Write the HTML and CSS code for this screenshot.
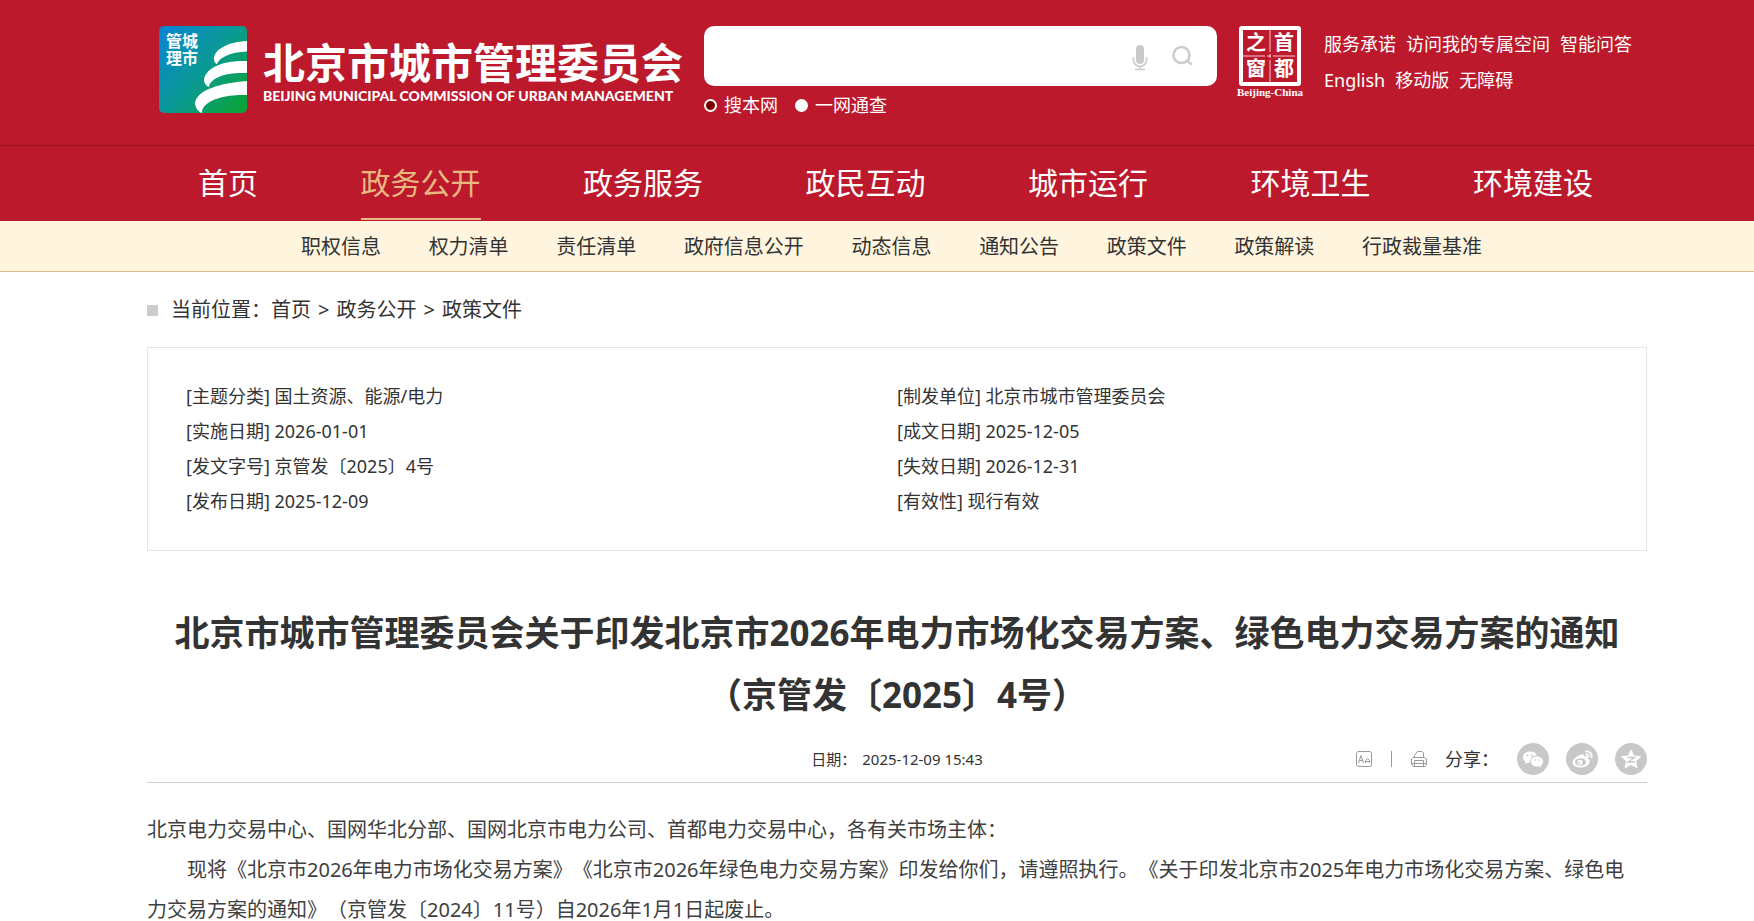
FILE: index.html
```html
<!DOCTYPE html>
<html lang="zh-CN">
<head>
<meta charset="utf-8">
<title>北京市城市管理委员会</title>
<link rel="stylesheet" href="styles.css">
</head>
<body>
<header class="header">
  <div class="wrap header-row">
    <a class="logo" href="#">
      <svg class="logo-mark" viewBox="0 0 88 87" aria-hidden="true">
        <defs>
          <linearGradient id="sky" x1="0" y1="0.1" x2="1" y2="0.9">
            <stop offset="0" stop-color="#0a86d0"/>
            <stop offset="0.5" stop-color="#0a9a94"/>
            <stop offset="1" stop-color="#0aa336"/>
          </linearGradient>
        </defs>
        <rect width="88" height="87" rx="5" fill="url(#sky)"/>
        <path fill="#fff" d="M88 15C68 16 54 24 55 34C56 37 57 38 58 38C60 32 71 26 88 25.500Z"/>
        <path fill="#fff" d="M88 35C62 34 46 43 45 54C45 57 47 60 50 61C51 52 66 46 88 47Z"/>
        <path fill="#fff" d="M88 55C61 57 38 64 36 77C36 81 39 86 43 87C42 77 60 68 88 69Z"/>
        <g class="mark-text"><text x="7" y="21">管城</text><text x="7" y="38">理市</text></g>
      </svg>
      <span class="logo-text">
        <span class="logo-cn">北京市城市管理委员会</span>
        <span class="logo-en">BEIJING MUNICIPAL COMMISSION OF URBAN MANAGEMENT</span>
      </span>
    </a>
    <form class="search">
      <div class="search-box">
        <input class="search-input" type="text" aria-label="搜索">
        <button class="icon-btn" type="button" aria-label="语音">
          <svg width="16" height="26" viewBox="0 0 16 26"><rect x="4" y="0" width="8" height="19" rx="4" fill="#c9c9c9"/><path d="M1.500 12v3a6.500 6.500 0 0 0 13 0v-3M8 21.500v3M3 24.500h10" fill="none" stroke="#c9c9c9" stroke-width="1.500"/></svg>
        </button>
        <button class="icon-btn" type="submit" aria-label="搜索">
          <svg width="22" height="26" viewBox="0 0 22 26"><circle cx="9.500" cy="10" r="8" fill="none" stroke="#ccc" stroke-width="2.500"/><path d="M14.500 15.500l5.500 4" stroke="#ccc" stroke-width="2.500"/></svg>
        </button>
      </div>
      <div class="scope">
        <label class="scope-item"><input type="radio" name="scope" checked>搜本网</label>
        <label class="scope-item"><input type="radio" name="scope">一网通查</label>
      </div>
    </form>
    <a class="seal" href="#">
      <svg class="seal-mark" viewBox="0 0 62 60" aria-hidden="true">
        <rect x="2" y="2" width="58" height="56" rx="1" fill="none" stroke="#fff" stroke-width="4"/>
        <path d="M31 4V56M4 30H58" stroke="#f6c9cd" stroke-width="1" stroke-dasharray="22 2 4 2"/>
        <g class="seal-text"><text x="7" y="24">之</text><text x="35" y="24">首</text><text x="7" y="50">窗</text><text x="35" y="50">都</text></g>
      </svg>
      <span class="seal-name">Beijing-China</span>
    </a>
    <div class="quick">
      <div class="quick-row"><a href="#">服务承诺</a><a href="#">访问我的专属空间</a><a href="#">智能问答</a></div>
      <div class="quick-row"><a href="#">English</a><a href="#">移动版</a><a href="#">无障碍</a></div>
    </div>
  </div>
</header>
<nav class="nav">
  <div class="wrap nav-row">
    <a href="#">首页</a><a class="active" href="#">政务公开</a><a href="#">政务服务</a><a href="#">政民互动</a><a href="#">城市运行</a><a href="#">环境卫生</a><a href="#">环境建设</a>
  </div>
</nav>
<nav class="subnav">
  <div class="wrap subnav-row">
    <a href="#">职权信息</a><a href="#">权力清单</a><a href="#">责任清单</a><a href="#">政府信息公开</a><a href="#">动态信息</a><a href="#">通知公告</a><a href="#">政策文件</a><a href="#">政策解读</a><a href="#">行政裁量基准</a>
  </div>
</nav>
<main class="main">
  <div class="wrap">
    <div class="crumbs"><span>当前位置：</span><a href="#">首页</a><span class="sep">&gt;</span><a href="#">政务公开</a><span class="sep">&gt;</span><a href="#">政策文件</a></div>
    <div class="meta">
      <span>[主题分类] 国土资源、能源/电力</span><span>[制发单位] 北京市城市管理委员会</span>
      <span>[实施日期] 2026-01-01</span><span>[成文日期] 2025-12-05</span>
      <span>[发文字号] 京管发〔2025〕4号</span><span>[失效日期] 2026-12-31</span>
      <span>[发布日期] 2025-12-09</span><span>[有效性] 现行有效</span>
    </div>
    <h1 class="title">北京市城市管理委员会关于印发北京市2026年电力市场化交易方案、绿色电力交易方案的通知<br>（京管发〔2025〕4号）</h1>
    <div class="info">
      <div class="date"><span>日期：</span><span>2025-12-09 15:43</span></div>
      <div class="tools">
        <button class="tool" type="button" aria-label="字号">
          <svg width="16" height="16" viewBox="0 0 16 16" fill="none" stroke="#999"><rect x=".5" y=".5" width="15" height="15" rx="2"/><path d="M2.500 12L5 4.500L7.500 12M3.500 9.500h3M9.500 12V9.500L11.500 7.500L13.500 9.500V12M9.500 10.500h4"/></svg>
        </button>
        <span class="bar"></span>
        <button class="tool" type="button" aria-label="打印">
          <svg width="16" height="16" viewBox="0 0 16 16" fill="none" stroke="#999"><path d="M3.500 6.500V4.500L6.500 .5H11L12.500 2V6.500M2 6.500H14L15.500 8V13L14 15.500H2L.5 13V8ZM3.500 15V9.500H12.500V15M.5 12.500H15.500"/></svg>
        </button>
        <span class="share-label">分享：</span>
        <div class="share">
          <a href="#" aria-label="微信"><svg viewBox="0 0 32 32"><circle cx="16" cy="16" r="16" fill="#c8c8c8"/><path fill="#fff" d="M13 8.500c-4 0-7 2.500-7 5.500 0 2 1 3.500 2.500 4.500L8 21l3-1.500 2 .3C13 15 16 12.500 20 12.500 19.300 10 16.500 8.500 13 8.500Z"/><path fill="#fff" d="M20 13.500c-3.500 0-6 2.200-6 5s2.500 5 6 5l2-.3 2.500 1.300-.5-2c1.300-1 2-2.300 2-4 0-2.800-2.500-5-6-5Z"/><g fill="#c8c8c8"><circle cx="10.500" cy="12.500" r="1"/><circle cx="15" cy="12.500" r="1"/><circle cx="18" cy="17" r=".8"/><circle cx="22" cy="17" r=".8"/></g></svg></a>
          <a href="#" aria-label="微博"><svg viewBox="0 0 32 32"><circle cx="16" cy="16" r="16" fill="#c8c8c8"/><path fill="#fff" d="M14 12c2-1.500 4.500-1 4 1.500 2-.8 4.500-.5 3.500 2 2 .6 2.800 2 2 4-1 3-4.500 5-9 5-4.500 0-8-2-8-5 0-2.500 4-6.500 7.500-7.500Z"/><ellipse cx="14.500" cy="19" rx="5.500" ry="3.800" fill="#c8c8c8"/><circle cx="14" cy="19.300" r="2.600" fill="#fff"/><circle cx="13.300" cy="19.700" r="1" fill="#c8c8c8"/><path fill="none" stroke="#fff" stroke-width="1.800" d="M19 8.500c4-1 7.500 2 6.500 6.500M19.500 11.500c2-.4 3.500 1 3.200 3"/></svg></a>
          <a href="#" aria-label="QQ空间"><svg viewBox="0 0 32 32"><circle cx="16" cy="16" r="16" fill="#c8c8c8"/><path fill="#fff" d="M16 6l3 6.500 7.500 .8-5.200 4.800L22.500 25.500 16 22l-6.500 3.500 1.500-7.400L5.500 13.300l7.500-.8Z"/><path d="M12.500 14.500h7l-6.500 4.500h7" fill="none" stroke="#c8c8c8" stroke-width="1.300"/></svg></a>
        </div>
      </div>
    </div>
    <article class="article">
      <p>北京电力交易中心、国网华北分部、国网北京市电力公司、首都电力交易中心，各有关市场主体：</p>
      <p class="indent">现将《北京市2026年电力市场化交易方案》《北京市2026年绿色电力交易方案》印发给你们，请遵照执行。《关于印发北京市2025年电力市场化交易方案、绿色电力交易方案的通知》（京管发〔2024〕11号）自2026年1月1日起废止。</p>
    </article>
  </div>
</main>
</body>
</html>
```
FILE: styles.css
```css
* { box-sizing: border-box; }
body {
  margin: 0;
  font-family: "Noto Sans", "Noto Sans CJK SC", sans-serif;
  font-size: 18px;
  color: #333;
  background: #fff;
  text-spacing-trim: space-all;
}
a { color: inherit; text-decoration: none; }
button { border: 0; padding: 0; background: none; cursor: pointer; }
svg { display: block; }
.wrap { max-width: 1500px; margin: 0 auto; }
.header, .nav, .subnav, .main { padding-left: 40px; }

.header { background: #bc1a2c; color: #fff; border-bottom: 1px solid #9a1222; }
.header-row { display: flex; align-items: flex-start; padding: 26px 0 27px 12px; }
.logo { display: flex; gap: 16px; width: 545px; flex: none; }
.logo-mark { width: 88px; height: 87px; flex: none; }
.mark-text { fill: #fff; font-size: 16px; font-weight: 700; }
.logo-text { display: flex; flex-direction: column; padding-top: 13px; white-space: nowrap; }
.logo-cn { font-size: 42px; line-height: 48px; font-weight: 700; }
.logo-en { font-family: Lato, sans-serif; font-size: 14px; line-height: 18px; font-weight: 900; }

.search { width: 513px; flex: none; }
.search-box { display: flex; align-items: center; height: 60px; padding: 3px 23px 0 0; gap: 24px; background: #fff; border-radius: 10px; }
.search-input { flex: 1; min-width: 0; height: 100%; border: 0; outline: 0; background: none; font: inherit; padding: 0 16px; }
.scope { display: flex; gap: 17px; margin-top: 6px; }
.scope-item { display: flex; align-items: center; gap: 7px; line-height: 26px; }
.scope input { appearance: none; width: 13px; height: 13px; margin: 0; border-radius: 50%; background: #fff; }
.scope input:checked { background: #7d0000; border: 2px solid #fff; }

.seal { display: flex; flex-direction: column; align-items: center; width: 68px; margin-left: 19px; flex: none; }
.seal-mark { width: 62px; height: 60px; }
.seal-text { fill: #fff; font-size: 20px; font-weight: 700; }
.seal-name { font: 700 11px/12px "Liberation Serif", serif; }
.quick { margin-left: 20px; white-space: nowrap; }
.quick-row { display: flex; gap: 10px; line-height: 36px; }

.nav { background: #bc1a2c; color: #fff; }
.nav-row { display: flex; justify-content: space-between; padding: 2px 54px 1px 51px; font-size: 30px; line-height: 70px; }
.nav-row a { border-bottom: 2px solid transparent; }
.nav-row .active { color: #e8b880; border-color: #e8b880; }
.subnav { background: #fff5df; border-bottom: 1px solid #d6bd8b; }
.subnav-row { display: flex; justify-content: space-between; padding: 2px 165px 0 154px; font-size: 20px; line-height: 48px; }

.crumbs { display: flex; align-items: center; font-size: 20px; line-height: 30px; padding-top: 23px; }
.crumbs::before { content: ""; width: 11px; height: 11px; margin-right: 13px; background: #ccc; }
.sep { margin: 0 7px; }
.meta { display: grid; grid-template-columns: 1fr 1fr; margin-top: 22px; padding: 31px 38px; border: 1px solid #e6e6e6; line-height: 35px; }
.title { margin: 51px 0 0; font-size: 35px; line-height: 62px; font-weight: 700; text-align: center; }
.info { display: grid; grid-template-columns: 1fr auto 1fr; align-items: center; padding: 17px 0 7px; border-bottom: 1px solid #ccc; }
.date { grid-column: 2; display: flex; gap: 6px; font-size: 15px; line-height: 24px; }
.tools { display: flex; align-items: center; justify-content: flex-end; }
.bar { width: 1px; height: 16px; margin: 0 19px; background: #999; }
.share-label { margin: 0 18px; line-height: 32px; }
.share { display: flex; gap: 17px; }
.share svg { width: 32px; height: 32px; }
.article { padding: 27px 20px 0 0; font-size: 20px; line-height: 40px; color: #404040; }
.article p { margin: 0; }
.indent { text-indent: 2em; }
```
